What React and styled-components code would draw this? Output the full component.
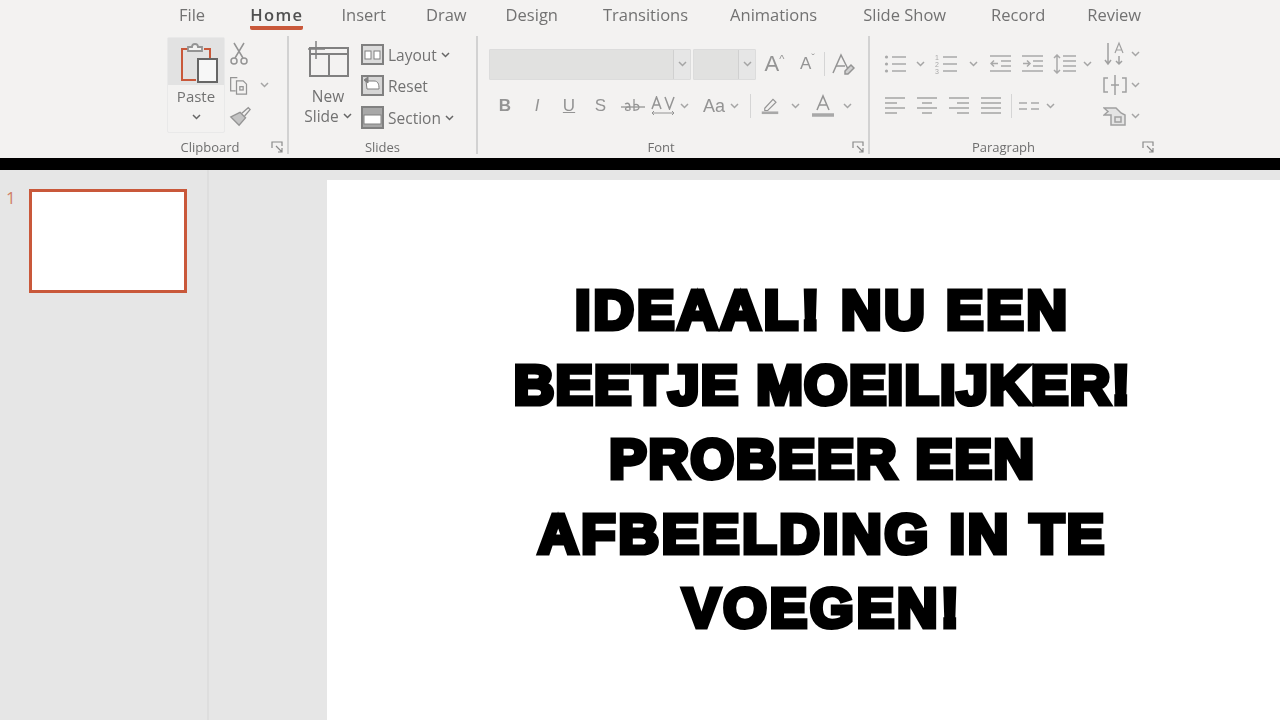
import styled, { createGlobalStyle } from "styled-components";

const GlobalStyle = createGlobalStyle`
  html, body { margin: 0; padding: 0; background: #fff; }
  body { font-family: "Open Sans", "Liberation Sans", sans-serif; overflow: hidden; }
`;

const INK = "#949494";
const TEXT = "#727272";
const ACCENT = "#c9583a";

const Page = styled.div`
  width: 1280px;
  height: 720px;
  display: flex;
  flex-direction: column;
  overflow: hidden;
`;

const Ribbon = styled.header`
  height: 158px;
  flex: none;
  background: #f3f2f1;
  overflow: hidden;
  filter: blur(0.6px);
`;

const Tabs = styled.nav`
  height: 36px;
  display: flex;
  padding-left: 179px;
`;

const Tab = styled.div`
  height: 26px;
  margin-right: ${(p) => p.$gap}px;
  font-size: 16.5px;
  line-height: 30px;
  color: ${(p) => (p.$active ? "#505050" : TEXT)};
  font-weight: ${(p) => (p.$active ? 600 : 400)};
  letter-spacing: ${(p) => (p.$active ? "1.4px" : "0")};
  white-space: nowrap;
  border-bottom: ${(p) => (p.$active ? `4px solid ${ACCENT}` : "none")};
  border-radius: 2px;
`;

const Groups = styled.div`
  display: flex;
  padding-left: 167px;
  height: 118px;
`;

const Group = styled.section`
  width: ${(p) => p.$width}px;
  flex: none;
  box-sizing: border-box;
  position: relative;
  display: flex;
  flex-direction: column;
  border-right: ${(p) => (p.$last ? "none" : "2px solid #d2d2d2")};
`;

const GroupBody = styled.div`
  height: 100px;
  display: flex;
  flex: none;
`;

const GroupLabel = styled.div`
  height: 18px;
  line-height: 22px;
  text-align: center;
  font-size: 13px;
  color: #6e6e6e;
  padding-right: ${(p) => p.$shift || 0}px;
`;

const Launcher = styled.svg`
  position: absolute;
  right: ${(p) => p.$right}px;
  bottom: 1px;
  width: 12px;
  height: 12px;
`;

const PasteButton = styled.div`
  width: 58px;
  height: 96px;
  flex: none;
  display: flex;
  flex-direction: column;
  align-items: center;
  margin-top: 1px;
  border: 1px solid #e9e9e9;
  box-sizing: border-box;
  border-radius: 2px;
`;

const PasteTop = styled.div`
  width: 100%;
  height: 47px;
  box-sizing: border-box;
  padding-left: 6px;
  background: #e2e2e2;
  display: flex;
  justify-content: center;
  align-items: center;
`;

const PasteText = styled.div`
  font-size: 15px;
  color: ${TEXT};
  line-height: 22px;
  margin-bottom: 7px;
`;

const SmallColumn = styled.div`
  display: flex;
  flex-direction: column;
  padding: ${(p) => p.$top}px 0 0 ${(p) => p.$left}px;
  gap: ${(p) => p.$gap}px;
`;

const IconRow = styled.div`
  display: flex;
  align-items: center;
  height: ${(p) => p.$height || 24}px;
  gap: ${(p) => p.$gap || 0}px;
`;

const Slot = styled.div`
  width: ${(p) => p.$width}px;
  height: 26px;
  flex: none;
  display: flex;
  align-items: center;
  justify-content: center;
`;

const NewSlide = styled.div`
  width: 64px;
  flex: none;
  margin-left: 7px;
  display: flex;
  flex-direction: column;
  align-items: center;
  padding-top: 4px;
  font-size: 15.5px;
  line-height: 20px;
  color: ${TEXT};
`;

const NewSlideIcon = styled.div`
  height: 41px;
  margin-bottom: 5px;
`;

const SlideOption = styled.div`
  display: flex;
  align-items: center;
  height: 31.5px;
  gap: 4px;
  font-size: 15.5px;
  color: ${TEXT};
`;

const Stack = styled.div`
  display: flex;
  flex-direction: column;
`;

const FontStack = styled(Stack)`
  padding: 12px 0 0 11px;
`;

const ComboRow = styled.div`
  display: flex;
  align-items: center;
  height: 32px;
`;

const Combo = styled.div`
  width: ${(p) => p.$width}px;
  height: 31px;
  margin-right: 2px;
  flex: none;
  box-sizing: border-box;
  background: #e1e1e0;
  border: 1px solid #dcdcdc;
  border-radius: 1px;
  display: flex;
  justify-content: flex-end;
`;

const ComboArrow = styled.div`
  width: 16px;
  height: 100%;
  border-left: 1px solid #d0d0d0;
  background: #e6e6e6;
  display: flex;
  align-items: center;
  justify-content: center;
`;

const VSep = styled.div`
  width: 1px;
  height: ${(p) => p.$height || 24}px;
  background: #d5d5d5;
  flex: none;
`;

const LetterBtn = styled.div`
  width: ${(p) => p.$width || 32}px;
  flex: none;
  text-align: center;
  font-family: "Liberation Sans", Arial, sans-serif;
  font-size: ${(p) => p.$size || 17}px;
  font-weight: ${(p) => (p.$bold ? 700 : 400)};
  font-style: ${(p) => (p.$italic ? "italic" : "normal")};
  text-decoration: ${(p) => p.$deco || "none"};
  color: ${INK};
`;

const Mark = styled.sup`
  font-size: 11px;
  line-height: 0;
`;

const Main = styled.main`
  flex: 1;
  display: flex;
  background: #e6e6e6;
  min-height: 0;
`;

const BlackBar = styled.div`
  height: 12px;
  flex: none;
  background: #000;
`;

const Thumbs = styled.aside`
  width: 209px;
  flex: none;
  box-sizing: border-box;
  border-right: 2px solid #dedede;
  display: flex;
  padding: 19px 0 0 6px;
`;

const ThumbNumber = styled.div`
  width: 23px;
  flex: none;
  font-size: 17px;
  line-height: 17px;
  color: #d08066;
`;

const Thumb = styled.div`
  width: 158px;
  height: 104px;
  box-sizing: border-box;
  background: #fff;
  border: 3px solid ${ACCENT};
`;

const Workspace = styled.div`
  flex: 1;
  display: flex;
  padding: 10px 0 0 118px;
`;

const Slide = styled.div`
  flex: 1;
  background: #fff;
  display: flex;
  flex-direction: column;
  align-items: center;
  padding: 93px 0 0 38px;
`;

const HeadLine = styled.div`
  height: 74.6px;
  line-height: 74.6px;
  font-family: "Liberation Sans", Arial, sans-serif;
  font-weight: 700;
  font-size: 56px;
  letter-spacing: ${(p) => p.$spacing}px;
  color: #000;
  white-space: nowrap;
  -webkit-text-stroke: 5px #000;
`;

// icons, all drawn on their own small grid
const Svg = ({ w, h, children, ...rest }) => (
  <svg width={w} height={h} viewBox={`0 0 ${w} ${h}`} fill="none" stroke={INK} strokeWidth="1.5" {...rest}>
    {children}
  </svg>
);

const Chevron = ({ dark }) => (
  <Svg w={9} h={6} stroke={dark ? "#666" : "#a5a5a5"}>
    <path d="M1 1l3.500 3.500L8 1" />
  </Svg>
);

const PasteIcon = () => (
  <Svg w={42} h={42}>
    <path d="M10 8H4v31h14" stroke={ACCENT} strokeWidth="2" />
    <path d="M26 8h6v9" stroke={ACCENT} strokeWidth="2" />
    <path d="M10 10V6h4c0-4 6-4 6 0h4v4z" fill="#f3f2f1" strokeWidth="1.800" />
    <rect x="20" y="18" width="19" height="23" fill="#f7f7f7" stroke="#666" strokeWidth="2" />
  </Svg>
);

const Scissors = () => (
  <Svg w={18} h={24}>
    <path d="M4 1l9 15M14 1L5 16" />
    <circle cx="4" cy="19" r="3" />
    <circle cx="14" cy="19" r="3" />
  </Svg>
);

const CopyIcon = () => (
  <Svg w={24} h={24}>
    <path d="M10 3H2v16h6" />
    <path d="M9 7h8l4 4v12H9z" />
    <rect x="13" y="14" width="4" height="4" />
  </Svg>
);

const BrushIcon = () => (
  <Svg w={24} h={22}>
    <path d="M14 8l7-6 2 2-6 7" />
    <path d="M12 7l6 6-7 8-9-9z" fill="#c4c4c4" />
  </Svg>
);

const NewSlideGlyph = () => (
  <Svg w={42} h={38}>
    <rect x="3" y="8" width="38" height="28" stroke="#808080" strokeWidth="2" />
    <path d="M3 14h38M22 14v22" stroke="#808080" strokeWidth="2" />
    <path d="M9 1v18M1 9h17" stroke="#808080" strokeWidth="1.500" />
  </Svg>
);

const LayoutIcon = () => (
  <Svg w={23} h={22} stroke="#808080" strokeWidth="2">
    <rect x="1" y="1" width="21" height="19" fill="#dcdcdc" />
    <rect x="4" y="7" width="6" height="8" fill="#fff" strokeWidth="1" />
    <rect x="13" y="7" width="6" height="8" fill="#fff" strokeWidth="1" />
  </Svg>
);

const ResetIcon = () => (
  <Svg w={23} h={22} stroke="#808080" strokeWidth="2">
    <rect x="1" y="1" width="21" height="19" fill="#d6d6d6" />
    <path d="M5 6h8c4 0 5 3 5 8H6z" fill="#fff" strokeWidth="1" />
    <path d="M3 5l4-3v6z" fill="#808080" strokeWidth="1" />
  </Svg>
);

const SectionIcon = () => (
  <Svg w={23} h={23} stroke="#808080" strokeWidth="2">
    <rect x="1" y="1" width="21" height="21" fill="#a8a8a8" />
    <rect x="3" y="9" width="17" height="9" fill="#fff" strokeWidth="1" />
  </Svg>
);

const LINE = "#a9a9a9";

const Lines = ({ rows, w = 22 }) => (
  <Svg w={w} h={20} strokeWidth="1.600" stroke={LINE}>
    {rows.map(([x1, x2, y]) => (
      <path key={y} d={`M${x1} ${y}H${x2}`} />
    ))}
  </Svg>
);

const Bullets = () => (
  <Svg w={22} h={20} strokeWidth="1.600" stroke={LINE}>
    <path d="M8 3h14M8 10h14M8 17h14" />
    <circle cx="2.500" cy="3" r="1.600" fill={LINE} stroke="none" />
    <circle cx="2.500" cy="10" r="1.600" fill={LINE} stroke="none" />
    <circle cx="2.500" cy="17" r="1.600" fill={LINE} stroke="none" />
  </Svg>
);

const Numbers = () => (
  <Svg w={22} h={20} strokeWidth="1.600" stroke={LINE}>
    <path d="M8 3h14M8 10h14M8 17h14" />
    <text x="0" y="6" fontSize="7" fill={LINE} stroke="none" fontFamily="Liberation Sans">1</text>
    <text x="0" y="13" fontSize="7" fill={LINE} stroke="none" fontFamily="Liberation Sans">2</text>
    <text x="0" y="20" fontSize="7" fill={LINE} stroke="none" fontFamily="Liberation Sans">3</text>
  </Svg>
);

const alignLeft = [[1, 21, 2], [1, 13, 7], [1, 21, 12], [1, 13, 17]];
const alignCenter = [[1, 21, 2], [6, 16, 7], [1, 21, 12], [6, 16, 17]];
const alignRight = [[1, 21, 2], [9, 21, 7], [1, 21, 12], [9, 21, 17]];
const justify = [[1, 21, 2], [1, 21, 7], [1, 21, 12], [1, 21, 17]];

const Columns = () => (
  <Svg w={20} h={16} strokeWidth="1.600" stroke={LINE}>
    <path d="M0 5h8M12 5h8M0 11h8M12 11h8" />
  </Svg>
);

const IndentIcon = ({ back }) => (
  <Svg w={22} h={20} strokeWidth="1.500" stroke={LINE}>
    <path d="M0 2h21M11 7h10M11 12h10M0 17h21" />
    <path d={back ? "M8 9.500H1M4 6.500l-3 3 3 3" : "M1 9.500h7M5 6.500l3 3-3 3"} />
  </Svg>
);

const LineSpacing = () => (
  <Svg w={24} h={20} strokeWidth="1.500" stroke={LINE}>
    <path d="M10 2h13M10 7h13M10 12h13M10 17h13" />
    <path d="M4 1v18M1 4l3-3 3 3M1 16l3 3 3-3" />
  </Svg>
);

const TextDirection = () => (
  <Svg w={22} h={26} strokeWidth="1.500" stroke="#a0a0a0">
    <path d="M4 2v21M1 19l3 4 3-4M15 15v8M12 20l3 3 3-3" />
    <path d="M11 12l4-10 4 10M12.500 9h5" strokeWidth="1.200" />
  </Svg>
);

const AlignText = () => (
  <Svg w={24} h={20} strokeWidth="1.500" stroke="#a0a0a0">
    <path d="M5 3H1v14h4M19 3h4v14h-4" />
    <path d="M12 0v20M8 10h8" />
  </Svg>
);

const SmartArt = () => (
  <Svg w={24} h={20} strokeWidth="1.500" stroke="#a0a0a0">
    <path d="M1 2h12l5 5 4 2v10H8V9H1l4-3.500z" fill="#e4e4e4" />
    <rect x="12" y="11" width="6" height="5" />
  </Svg>
);

const GrowFont = ({ up, size }) => (
  <LetterBtn $width={33} $size={size}>
    A<Mark>{up ? "^" : "ˇ"}</Mark>
  </LetterBtn>
);

const ClearFormat = () => (
  <Svg w={24} h={24}>
    <path d="M2 21L10 3l7 14" />
    <path d="M5 14h9" />
    <path d="M14 19l6-6 3 3-6 6h-3z" fill="#d0d0d0" />
  </Svg>
);

const Strike = () => (
  <Svg w={24} h={18} strokeWidth="1.300">
    <path d="M0 10h24" />
    <path d="M4 7c4-2 5 0 5 6M9 10c-6-1-6 5 0 3M13 2v12M13 8c5-3 8 6 0 5" />
  </Svg>
);

const Spacing = () => (
  <Stack>
    <Svg w={24} h={14} strokeWidth="1.500">
      <path d="M1 13L5.500 1 10 13M2.500 9h6M14 1l4.500 12L23 1" />
    </Svg>
    <Svg w={24} h={6} strokeWidth="1">
      <path d="M1 3h22M1 3l2-2M1 3l2 2M23 3l-2-2M23 3l-2 2" />
    </Svg>
  </Stack>
);

const Highlighter = () => (
  <Svg w={24} h={24}>
    <path d="M5 15L16 3l4 4L9 18H5z" />
    <path d="M1 21h22" strokeWidth="3.500" stroke="#a8a8a8" />
  </Svg>
);

const FontColor = () => (
  <Svg w={24} h={24}>
    <path d="M6 16L12 2l6 14M8 11h8" />
    <path d="M1 21h22" strokeWidth="3.500" stroke="#a8a8a8" />
  </Svg>
);

const LauncherIcon = ({ right }) => (
  <Launcher $right={right} viewBox="0 0 12 12" fill="none" stroke="#8a8a8a" strokeWidth="1.200">
    <path d="M1 7V1h10v4M5 5l6 6M11 7v4H7" />
  </Launcher>
);

const TABS = [
  ["File", 45],
  ["Home", 38],
  ["Insert", 40],
  ["Draw", 39],
  ["Design", 45],
  ["Transitions", 42],
  ["Animations", 46],
  ["Slide Show", 45],
  ["Record", 42],
  ["Review", 0],
];

// letter spacing per line so each line keeps the width it has on the slide
const HEADLINE = [
  ["IDEAAL! NU EEN", 2.9],
  ["BEETJE MOEILIJKER!", 1.3],
  ["PROBEER EEN", 1.7],
  ["AFBEELDING IN TE", 2.9],
  ["VOEGEN!", 3],
];

export default function App() {
  return (
    <Page>
      <GlobalStyle />
      <Ribbon>
        <Tabs>
          {TABS.map(([name, gap]) => (
            <Tab key={name} $gap={gap} $active={name === "Home"}>
              {name}
            </Tab>
          ))}
        </Tabs>
        <Groups>
          <Group $width={122}>
            <GroupBody>
              <PasteButton>
                <PasteTop>
                  <PasteIcon />
                </PasteTop>
                <PasteText>Paste</PasteText>
                <Chevron dark />
              </PasteButton>
              <SmallColumn $top={6} $left={4} $gap={7}>
                <IconRow>
                  <Slot $width={20}><Scissors /></Slot>
                </IconRow>
                <IconRow>
                  <Slot $width={20}><CopyIcon /></Slot>
                  <Slot $width={30}><Chevron /></Slot>
                </IconRow>
                <IconRow>
                  <Slot $width={22}><BrushIcon /></Slot>
                </IconRow>
              </SmallColumn>
            </GroupBody>
            <GroupLabel $shift={34}>Clipboard</GroupLabel>
            <LauncherIcon right={4} />
          </Group>

          <Group $width={189}>
            <GroupBody>
              <NewSlide>
                <NewSlideIcon><NewSlideGlyph /></NewSlideIcon>
                <span>New</span>
                <IconRow $height={20} $gap={4}>
                  Slide <Chevron dark />
                </IconRow>
              </NewSlide>
              <SmallColumn $top={3} $left={1} $gap={0}>
                <SlideOption><LayoutIcon />Layout <Chevron dark /></SlideOption>
                <SlideOption><ResetIcon />Reset</SlideOption>
                <SlideOption><SectionIcon />Section <Chevron dark /></SlideOption>
              </SmallColumn>
            </GroupBody>
            <GroupLabel>Slides</GroupLabel>
          </Group>

          <Group $width={392}>
            <GroupBody>
              <FontStack>
                <ComboRow>
                  <Combo $width={202}><ComboArrow><Chevron /></ComboArrow></Combo>
                  <Combo $width={63}><ComboArrow><Chevron /></ComboArrow></Combo>
                  <GrowFont up size={22} />
                  <GrowFont size={17} />
                  <VSep />
                  <Slot $width={36}><ClearFormat /></Slot>
                </ComboRow>
                <IconRow $height={52}>
                  <LetterBtn $bold>B</LetterBtn>
                  <LetterBtn $italic>I</LetterBtn>
                  <LetterBtn $deco="underline">U</LetterBtn>
                  <LetterBtn $width={31}>S</LetterBtn>
                  <Slot $width={33}><Strike /></Slot>
                  <Slot $width={28}><Spacing /></Slot>
                  <Slot $width={14}><Chevron /></Slot>
                  <Slot $width={8} />
                  <LetterBtn $width={30} $size={18}>Aa</LetterBtn>
                  <Slot $width={10}><Chevron /></Slot>
                  <Slot $width={22}><VSep /></Slot>
                  <Slot $width={18}><Highlighter /></Slot>
                  <Slot $width={32}><Chevron /></Slot>
                  <Slot $width={24}><FontColor /></Slot>
                  <Slot $width={24}><Chevron /></Slot>
                </IconRow>
              </FontStack>
            </GroupBody>
            <GroupLabel $shift={24}>Font</GroupLabel>
            <LauncherIcon right={4} />
          </Group>

          <Group $width={285} $last>
            <GroupBody>
              <Stack>
                <IconRow $height={56}>
                  <Slot $width={14} />
                  <Slot $width={22}><Bullets /></Slot>
                  <Slot $width={28}><Chevron /></Slot>
                  <Slot $width={24}><Numbers /></Slot>
                  <Slot $width={30}><Chevron /></Slot>
                  <Slot $width={26}><IndentIcon back /></Slot>
                  <Slot $width={38}><IndentIcon /></Slot>
                  <Slot $width={26}><LineSpacing /></Slot>
                  <Slot $width={18}><Chevron /></Slot>
                </IconRow>
                <IconRow $height={28}>
                  <Slot $width={9} />
                  <Slot $width={32}><Lines rows={alignLeft} /></Slot>
                  <Slot $width={32}><Lines rows={alignCenter} /></Slot>
                  <Slot $width={32}><Lines rows={alignRight} /></Slot>
                  <Slot $width={32}><Lines rows={justify} /></Slot>
                  <Slot $width={8}><VSep /></Slot>
                  <Slot $width={28}><Columns /></Slot>
                  <Slot $width={14}><Chevron /></Slot>
                </IconRow>
              </Stack>
              <SmallColumn $top={6} $left={6} $gap={7}>
                <IconRow>
                  <Slot $width={26}><TextDirection /></Slot>
                  <Slot $width={14}><Chevron /></Slot>
                </IconRow>
                <IconRow>
                  <Slot $width={26}><AlignText /></Slot>
                  <Slot $width={14}><Chevron /></Slot>
                </IconRow>
                <IconRow>
                  <Slot $width={26}><SmartArt /></Slot>
                  <Slot $width={14}><Chevron /></Slot>
                </IconRow>
              </SmallColumn>
            </GroupBody>
            <GroupLabel $shift={18}>Paragraph</GroupLabel>
            <LauncherIcon right={1} />
          </Group>
        </Groups>
      </Ribbon>
      <BlackBar />
      <Main>
        <Thumbs>
          <ThumbNumber>1</ThumbNumber>
          <Thumb />
        </Thumbs>
        <Workspace>
          <Slide>
            {HEADLINE.map(([line, spacing]) => (
              <HeadLine key={line} $spacing={spacing}>{line}</HeadLine>
            ))}
          </Slide>
        </Workspace>
      </Main>
    </Page>
  );
}
